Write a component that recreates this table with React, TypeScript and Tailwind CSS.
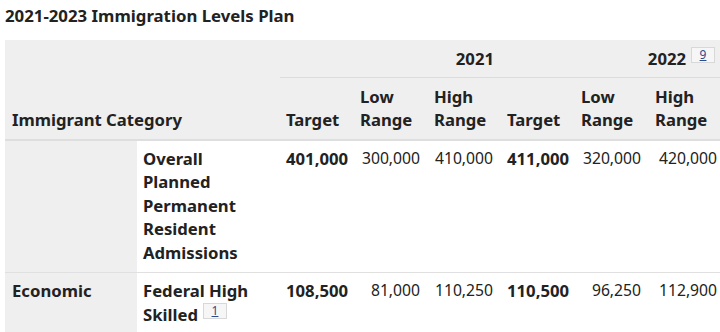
const years = ['2021', '2022']

interface PlanRow {
  group: string
  label: string
  note?: string
  values: string[]
}

const rows: PlanRow[] = [
  {
    group: '',
    label: 'Overall Planned Permanent Resident Admissions',
    values: ['401,000', '300,000', '410,000', '411,000', '320,000', '420,000'],
  },
  {
    group: 'Economic',
    label: 'Federal High Skilled',
    note: '1',
    values: ['108,500', '81,000', '110,250', '110,500', '96,250', '112,900'],
  },
]

function NoteRef({ n }: { n: string }) {
  return (
    <span className="ml-[5px] inline-block h-[16px] w-[24px] border border-[#d8d8d8] bg-[#f6f6f6] text-center align-[6px] text-[12px] leading-[14px] font-normal text-[#2a4b8d]">
      <span className="underline">{n}</span>
    </span>
  )
}

export default function App() {
  return (
    <div className="h-[332px] w-[720px] overflow-hidden bg-white font-['Noto_Sans',sans-serif] text-[#222]">
      <div className="pl-[5px] pt-[4px]">
        <h2 className="text-[16.8px] leading-[24px] font-bold">2021-2023 Immigration Levels Plan</h2>
        <table className="mt-[12px] w-[720px] table-fixed border-collapse text-[16.7px] leading-[23.5px]">
          <colgroup>
            <col className="w-[132px]" />
            <col className="w-[143px]" />
            <col className="w-[74px]" />
            <col className="w-[74px]" />
            <col className="w-[73px]" />
            <col className="w-[74px]" />
            <col className="w-[74px]" />
            <col className="w-[76px]" />
          </colgroup>
          <thead className="bg-[#efefef]">
            <tr>
              <th colSpan={2} rowSpan={2} className="border-b-2 border-[#dedede] px-[7px] py-[7px] text-left align-bottom font-bold">
                Immigrant Category
              </th>
              <th colSpan={3} className="h-[37px] border-b border-[#dcdcdc] pl-[6px] pr-[7px] py-[6px] text-right align-bottom font-bold whitespace-nowrap">
                2021
              </th>
              <th colSpan={3} className="h-[37px] border-b border-[#dcdcdc] pl-[6px] pr-[10px] py-[6px] text-right align-bottom font-bold whitespace-nowrap">
                2022
                <NoteRef n="9" />
              </th>
            </tr>
            <tr>
              {years.map((y) => (
                <>
                  <th key={y + 't'} className="border-b-2 border-[#dedede] px-[6px] py-[7px] text-left align-bottom font-bold">Target</th>
                  <th key={y + 'l'} className="border-b-2 border-[#dedede] px-[6px] py-[7px] text-left align-bottom font-bold">Low Range</th>
                  <th key={y + 'h'} className="border-b-2 border-[#dedede] px-[6px] py-[7px] text-left align-bottom font-bold">High Range</th>
                </>
              ))}
            </tr>
          </thead>
          <tbody>
            {rows.map((r) => (
              <tr key={r.label} className="border-b border-[#e0e0e0]">
                <th className="bg-[#efefef] px-[7px] pt-[6px] pb-[8px] text-left align-top font-bold">{r.group}</th>
                <td className="pl-[6px] pr-[12px] pt-[6px] pb-[8px] align-top font-bold">
                  {r.label}
                  {r.note && <NoteRef n={r.note} />}
                </td>
                {r.values.map((v, i) => (
                  <td key={i} className={`pl-[6px] pr-[8px] pt-[6px] pb-[8px] text-right align-top whitespace-nowrap ${i % 3 === 0 ? 'font-bold' : 'text-[15.7px]'}`}>
                    {v}
                  </td>
                ))}
              </tr>
            ))}
          </tbody>
        </table>
      </div>
    </div>
  )
}
